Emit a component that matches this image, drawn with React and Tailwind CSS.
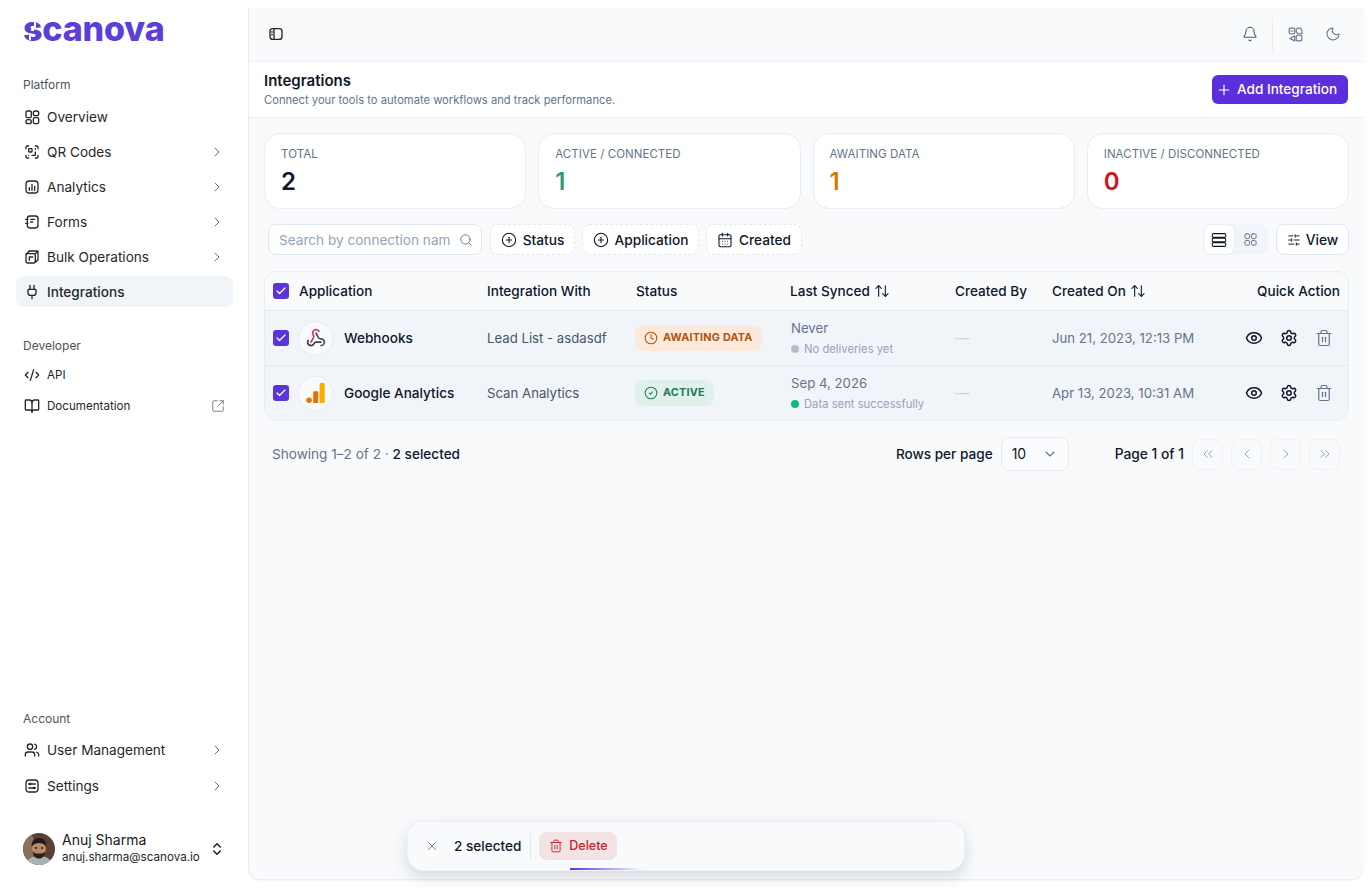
import React from "react";
import {
  ArrowUpDown, Bell, BookOpen, CalendarDays, Check, ChevronDown, ChevronLeft, ChevronRight, ChevronsLeft, ChevronsRight,
  ChevronsUpDown, CircleCheck, CirclePlus, Clock, CodeXml, Eye, Moon, Plug, Plus, ScanQrCode, Search, Settings,
  SlidersHorizontal, SquareArrowOutUpRight, Trash2, Users, X,
} from "lucide-react";

const S = ({ children, className = "size-4", sw = 2 }) => (
  <svg viewBox="0 0 24 24" fill="none" stroke="currentColor" strokeWidth={sw} strokeLinecap="round" strokeLinejoin="round" className={className}>
    {children}
  </svg>
);
const OverviewIcon = () => (
  <S className="size-4">
    <rect x="3" y="3" width="8" height="10" rx="2" />
    <rect x="14" y="3" width="8" height="7" rx="3" />
    <rect x="3" y="16" width="8" height="6" rx="3" />
    <rect x="14" y="13" width="8" height="9" rx="2" />
  </S>
);
const AnalyticsIcon = () => (
  <S className="size-4">
    <rect x="3" y="3" width="18" height="18" rx="5" />
    <path d="M8 17v-4M12 17V8M16 17v-6" />
  </S>
);
const FormsIcon = () => (
  <S className="size-4">
    <rect x="5" y="3" width="16" height="18" rx="4" />
    <path d="M10 8h6M10 12h3M2.500 8H6M2.500 14H6" />
  </S>
);
const BulkIcon = () => (
  <S className="size-4">
    <path d="M8 3h10a3 3 0 0 1 3 3v10l-4 4" />
    <rect x="3" y="7" width="14" height="14" rx="3" />
    <path d="M8 3 3 8M21 3l-4 4" />
    <path d="M8 17v-5h5" />
  </S>
);
const SettingsIcon = () => (
  <S className="size-4">
    <rect x="3" y="3" width="18" height="18" rx="5" />
    <path d="M7 9h10M7 15h10" />
    <circle cx="9" cy="9" r="1" />
    <circle cx="15" cy="15" r="1" />
  </S>
);
const PanelIcon = () => (
  <S className="size-4">
    <rect x="3" y="4" width="18" height="16" rx="4" />
    <path d="M9 4v16M5.500 9H6.500M5.500 13H6.500" />
  </S>
);
const LangIcon = () => (
  <S className="size-[17px] text-[#64748b]" sw={1.6}>
    <rect x="3" y="3" width="8" height="8" rx="2" />
    <path d="M5.500 7h3" />
    <rect x="13" y="13" width="8" height="8" rx="2" />
    <path d="M15 3h4l2 3v5h-6l-2-3V5z" />
    <path d="M11 14v7l-7-3.500z" />
  </S>
);
const RowsIcon = () => (
  <S className="size-[18px]" sw={1.4}>
    <rect x="3" y="3.500" width="18" height="5" rx="2" />
    <rect x="3" y="9.500" width="18" height="5" rx="2" />
    <rect x="3" y="15.500" width="18" height="5" rx="2" />
  </S>
);
const GridIcon = () => (
  <S className="size-[15px] text-[#64748b]" sw={1.6}>
    <rect x="3" y="3" width="7.500" height="7.500" rx="2.500" />
    <rect x="13.500" y="3" width="7.500" height="7.500" rx="2.500" />
    <rect x="3" y="13.500" width="7.500" height="7.500" rx="2.500" />
    <rect x="13.500" y="13.500" width="7.500" height="7.500" rx="2.500" />
  </S>
);
const WebhookLogo = () => (
  <svg viewBox="0 0 24 24" fill="none" strokeWidth="2" strokeLinecap="round" strokeLinejoin="round" className="size-5">
    <path stroke="#37474f" d="M18 16.980h-5.990c-1.100 0-1.950.940-2.480 1.900A4 4 0 0 1 2 17c.010-.700.200-1.400.570-2" />
    <path stroke="#c73a63" d="m6 17 3.130-5.780c.530-.970.100-2.180-.500-3.100a4 4 0 1 1 6.890-4.060" />
    <path stroke="#4b4b4b" d="m12 6 3.130 5.730C15.660 12.700 16.900 13 18 13a4 4 0 0 1 0 8" />
  </svg>
);
const GaLogo = () => (
  <svg viewBox="0 0 20 24" className="h-[22px] w-[19px]">
    <circle cx="3" cy="20" r="3" fill="#e37400" />
    <rect x="7.500" y="10" width="5.500" height="13" rx="1.200" fill="#e37400" />
    <rect x="14.500" y="1" width="5.500" height="22" rx="1.200" fill="#f9ab00" />
  </svg>
);
const Avatar = () => (
  <svg viewBox="0 0 32 32" className="size-8 rounded-full shrink-0">
    <rect width="32" height="32" fill="#5a4034" />
    <ellipse cx="6" cy="14" rx="6" ry="13" fill="#8d6f5e" />
    <path d="M3 32c1-7 7-9 13-9s12 2 13 9z" fill="#a9b2b5" />
    <ellipse cx="16" cy="16" rx="7" ry="8.500" fill="#b98a6c" />
    <path d="M8.500 14c0-6 3-9 7.500-9s7.500 3 7.500 9c-2-3-4-4-7.500-4s-5.500 1-7.500 4z" fill="#231814" />
    <path d="M9.500 18c1 6 3.500 7.500 6.500 7.500s5.500-1.500 6.500-7.500c-2 3-4 2.500-6.500 2.500s-4.500.500-6.500-2.500z" fill="#2e1f19" />
    <circle cx="13" cy="15" r="1" fill="#231814" />
    <circle cx="19" cy="15" r="1" fill="#231814" />
  </svg>
);

const NavItem = ({ icon, label, chevron, active }) => (
  <div className={`flex h-[31px] items-center rounded-lg pl-2 pr-2 ${active ? "bg-[#f1f5f9]" : ""}`}>
    <span className="flex w-4 justify-center text-[#27272a]">{icon}</span>
    <span className={`ml-[7px] pt-[2px] text-[13.6px] text-[#27272a] ${active ? "font-medium" : ""}`}>{label}</span>
    {chevron && <ChevronRight className="ml-auto size-4 text-[#71717a]" strokeWidth={1.5} />}
  </div>
);

const Label = ({ children }) => <div className="px-[7px] text-xs leading-4 text-[#52525b]">{children}</div>;

const Stat = ({ label, value, color }) => (
  <div className="h-[76px] rounded-2xl border border-[#e9edf2] bg-white px-4 pt-[12px]">
    <div className="text-[11.5px] leading-4 tracking-[0.005em] text-[#64748b]">{label}</div>
    <div className={`mt-[6px] text-2xl font-semibold leading-7 ${color}`}>{value}</div>
  </div>
);

const FilterBtn = ({ icon, label, className }) => (
  <div className={`flex h-[31px] items-center justify-center gap-[6px] rounded-lg border border-dashed border-[#e2e8f0] bg-white text-[13.7px] font-medium text-[#0f172a] ${className}`}>
    {icon}
    <span className="pt-[2px]">{label}</span>
  </div>
);

const Check2 = () => (
  <div className="flex size-4 items-center justify-center rounded-[3px] bg-[#5b34da] shrink-0">
    <Check className="size-3 text-white" strokeWidth={2.5} />
  </div>
);

const cols = "grid grid-cols-[214px_149px_154px_165px_97px_1fr] items-center";

const Head = ({ children, sort, className = "" }) => (
  <div className={`flex items-center gap-1 text-[13.6px] font-medium text-[#0f172a] ${className}`}>
    {children}
    {sort && <ArrowUpDown className="size-4" strokeWidth={1.6} />}
  </div>
);

const Actions = () => (
  <div className="flex items-center justify-end gap-[17px] pr-[15px] text-[#0f172a]">
    <Eye className="size-[18px]" />
    <Settings className="size-[18px]" />
    <Trash2 className="size-[18px] text-[#64748b]" strokeWidth={1.6} />
  </div>
);

const Row = ({ logo, name, target, pill, sync, dot, note, date }) => (
  <div className={`${cols} h-[55px] border-t border-[#e2e8f0] bg-[#f1f5f9] pl-2`}>
    <div className="flex items-center">
      <Check2 />
      <div className="ml-[9px] flex size-[35px] items-center justify-center rounded-full border border-[#e8ecf1] bg-[#f8fafc]">{logo}</div>
      <span className="ml-[11px] text-[13.6px] font-medium text-[#0f172a]">{name}</span>
    </div>
    <div className="pt-[2px] text-[13.2px] text-[#475569]">{target}</div>
    <div>{pill}</div>
    <div className="-mt-[2px] pl-px">
      <div className="text-[13.2px] leading-5 text-[#64748b]">{sync}</div>
      <div className="mt-[3px] flex items-center gap-[5px] text-[11.25px] leading-4 text-[#94a3b8]">
        <span className={`size-2 rounded-full ${dot}`} />
        {note}
      </div>
    </div>
    <div className="text-sm text-[#cbd5e1]">—</div>
    <div className="flex items-center justify-between">
      <span className="pt-[2px] text-[13.2px] text-[#64748b]">{date}</span>
      <Actions />
    </div>
  </div>
);

const Pill = ({ icon, label, className }) => (
  <div className={`-ml-px inline-flex h-[26px] items-center gap-[5px] rounded-lg px-[9px] text-[10.8px] font-bold tracking-[0.02em] ${className}`}>
    {icon}
    {label}
  </div>
);

const PageBtn = ({ children }) => (
  <div className="flex size-[31px] items-center justify-center rounded-lg border border-[#eef1f5] text-[#94a3b8]">{children}</div>
);

export default function App() {
  return (
    <div className="relative flex h-[888px] w-full overflow-hidden bg-white font-['Inter',sans-serif]">
      <aside className="flex w-[248px] shrink-0 flex-col pb-[22px] pl-4 pr-[15px]">
        <div className="relative ml-[7px] mt-[7px] h-[44px] text-[34px] font-extrabold leading-[44px] tracking-[-0.005em] text-[#5b3fd6]">
          scanova
          <span className="absolute left-[11px] top-[15px] h-[6px] w-[2px] bg-white" />
          <span className="absolute left-[6px] top-[27px] h-[6px] w-[2px] bg-white" />
          <span className="absolute left-[8px] top-[22px] h-[2px] w-[3px] bg-white" />
        </div>
        <div className="mt-[26px]">
          <Label>Platform</Label>
        </div>
        <div className="mt-[8px] flex flex-col gap-1">
          <NavItem icon={<OverviewIcon />} label="Overview" />
          <NavItem icon={<ScanQrCode className="size-4" />} label="QR Codes" chevron />
          <NavItem icon={<AnalyticsIcon />} label="Analytics" chevron />
          <NavItem icon={<FormsIcon />} label="Forms" chevron />
          <NavItem icon={<BulkIcon />} label="Bulk Operations" chevron />
          <NavItem icon={<Plug className="size-4" />} label="Integrations" active />
        </div>
        <div className="mt-[31px]">
          <Label>Developer</Label>
        </div>
        <div className="mt-[5px] flex flex-col">
          <div className="flex h-[31px] items-center px-2 text-[#27272a]">
            <CodeXml className="size-4" />
            <span className="ml-[7px] pt-[2px] text-[11.6px]">API</span>
          </div>
          <div className="flex h-[31px] items-center px-2 text-[#27272a]">
            <BookOpen className="size-4" />
            <span className="ml-[7px] pt-[2px] text-[11.6px]">Documentation</span>
            <SquareArrowOutUpRight className="ml-auto size-[14px] text-[#71717a]" strokeWidth={1.5} />
          </div>
        </div>
        <div className="mt-auto">
          <Label>Account</Label>
        </div>
        <div className="mt-[7px] flex flex-col gap-[5px]">
          <NavItem icon={<Users className="size-4" />} label="User Management" chevron />
          <NavItem icon={<SettingsIcon />} label="Settings" chevron />
        </div>
        <div className="mt-[30px] flex items-center pl-[7px] pr-2">
          <Avatar />
          <div className="ml-[7px] min-w-0 flex-1">
            <div className="text-sm leading-[17px] text-[#18181b]">Anuj Sharma</div>
            <div className="mt-px text-[11.65px] leading-[17px] text-[#27272a]">anuj.sharma@scanova.io</div>
          </div>
          <ChevronsUpDown className="size-4 text-[#18181b]" />
        </div>
      </aside>

      <main className="my-2 mr-2 flex min-w-0 flex-1 flex-col rounded-b-xl border-b border-l border-[#e9edf2] bg-[#f8fafc] shadow-[0_1px_2px_rgba(0,0,0,0.04)]">
        <div className="flex h-[54px] shrink-0 items-center border-b border-[#eef1f5] pb-px pl-[19px] pr-[23px]">
          <span className="text-[#27272a]"><PanelIcon /></span>
          <div className="ml-auto flex items-center">
            <Bell className="size-4 text-[#475569]" strokeWidth={1.6} />
            <div className="mx-[14px] h-[34px] w-px bg-[#eaeef3]" />
            <LangIcon />
            <Moon className="ml-[21px] size-4 text-[#64748b]" strokeWidth={1.6} />
          </div>
        </div>
        <div className="flex h-[56px] shrink-0 items-center justify-between border-b border-[#eef1f5] bg-white pl-[15px] pr-4">
          <div>
            <div className="text-[15px] font-semibold leading-5 text-[#0f172a]">Integrations</div>
            <div className="mt-[1px] text-[11.2px] leading-4 text-[#64748b]">Connect your tools to automate workflows and track performance.</div>
          </div>
          <div className="flex h-[29px] w-[136px] items-center gap-[5px] rounded-md bg-[#5b30dc] pl-1 text-[13.6px] font-medium text-white">
            <Plus className="size-4" strokeWidth={1.8} />
            Add Integration
          </div>
        </div>
        <div className="flex flex-1 flex-col pl-[15px] pr-[15px] pt-[15px]">
          <div className="grid grid-cols-4 gap-3">
            <Stat label="TOTAL" value="2" color="text-[#0f172a]" />
            <Stat label="ACTIVE / CONNECTED" value="1" color="text-[#2b9b74]" />
            <Stat label="AWAITING DATA" value="1" color="text-[#d97706]" />
            <Stat label="INACTIVE / DISCONNECTED" value="0" color="text-[#d0141f]" />
          </div>

          <div className="mt-[15px] flex items-center pl-1">
            <div className="flex h-[31px] w-[214px] items-center rounded-lg border border-[#e2e8f0] bg-white pl-[10px] pr-2">
              <span className="flex-1 whitespace-nowrap pt-[2px] text-[13.6px] text-[#94a3b8]">Search by connection nam</span>
              <Search className="size-[14px] shrink-0 text-[#64748b]" strokeWidth={1.6} />
            </div>
            <FilterBtn className="ml-2 w-[85px]" icon={<CirclePlus className="size-4" strokeWidth={1.6} />} label="Status" />
            <FilterBtn className="ml-[7px] w-[117px]" icon={<CirclePlus className="size-4" strokeWidth={1.6} />} label="Application" />
            <FilterBtn className="ml-[7px] w-[96px]" icon={<CalendarDays className="size-4" strokeWidth={1.6} />} label="Created" />
            <div className="ml-auto flex h-[31px] w-[65px] rounded-lg bg-[#f1f5f9]">
              <div className="flex w-[32px] items-center justify-center rounded-lg border border-[#e9edf2] bg-white text-[#0f172a]"><RowsIcon /></div>
              <div className="flex flex-1 items-center justify-center pr-[3px]"><GridIcon /></div>
            </div>
            <div className="ml-2 flex h-[31px] w-[73px] items-center justify-center gap-[5px] rounded-lg border border-[#e2e8f0] bg-white text-[13.8px] font-medium text-[#0f172a]">
              <SlidersHorizontal className="size-[14px]" strokeWidth={1.6} />
              <span className="pt-[2px]">View</span>
            </div>
          </div>

          <div className="mt-4 overflow-hidden rounded-xl border border-[#e9edf2]">
            <div className={`${cols} h-[38px] bg-[#f8fafc] pl-2`}>
              <div className="flex items-center gap-[10px]">
                <Check2 />
                <Head>Application</Head>
              </div>
              <Head>Integration With</Head>
              <Head>Status</Head>
              <Head sort>Last Synced</Head>
              <Head>Created By</Head>
              <div className="flex items-center justify-between">
                <Head sort>Created On</Head>
                <Head className="pr-2">Quick Action</Head>
              </div>
            </div>
            <Row
              logo={<WebhookLogo />}
              name="Webhooks"
              target="Lead List - asdasdf"
              pill={<Pill className="bg-[#fbeadb] text-[#b45309]" icon={<Clock className="size-[14px]" strokeWidth={1.8} />} label="AWAITING DATA" />}
              sync="Never"
              dot="bg-[#b5bdc9]"
              note="No deliveries yet"
              date="Jun 21, 2023, 12:13 PM"
            />
            <Row
              logo={<GaLogo />}
              name="Google Analytics"
              target="Scan Analytics"
              pill={<Pill className="bg-[#dff1ea] text-[#217a5b]" icon={<CircleCheck className="size-[14px]" strokeWidth={1.8} />} label="ACTIVE" />}
              sync="Sep 4, 2026"
              dot="bg-[#10b981]"
              note="Data sent successfully"
              date="Apr 13, 2023, 10:31 AM"
            />
          </div>

          <div className="mt-4 flex items-center pl-2 pr-[9px]">
            <div className="text-[13.6px] text-[#64748b]">
              Showing 1–2 of 2 · <span className="font-medium text-[#0f172a]">2 selected</span>
            </div>
            <div className="ml-auto text-[13.6px] font-medium text-[#0f172a]">Rows per page</div>
            <div className="ml-2 flex h-[34px] w-[68px] items-center justify-between rounded-lg border border-[#e8ecf1] bg-[#fbfcfd] pl-[10px] pr-[10px] text-sm text-[#0f172a]">
              10
              <ChevronDown className="size-4 text-[#64748b]" strokeWidth={1.6} />
            </div>
            <div className="ml-[46px] text-[13.8px] font-medium text-[#0f172a]">Page 1 of 1</div>
            <div className="ml-2 flex gap-2">
              <PageBtn><ChevronsLeft className="size-4" strokeWidth={1.5} /></PageBtn>
              <PageBtn><ChevronLeft className="size-4" strokeWidth={1.5} /></PageBtn>
              <PageBtn><ChevronRight className="size-4" strokeWidth={1.5} /></PageBtn>
              <PageBtn><ChevronsRight className="size-4" strokeWidth={1.5} /></PageBtn>
            </div>
          </div>
        </div>
      </main>

      <div className="absolute left-[407px] top-[821px] flex h-[50px] w-[558px] items-center overflow-hidden rounded-2xl border border-[#eef1f5] bg-[#f8fafc] pl-[17px] shadow-[0_6px_16px_rgba(15,23,42,0.14)]">
        <X className="size-[14px] text-[#64748b]" strokeWidth={1.6} />
        <span className="ml-[15px] text-[13.6px] font-medium text-[#0f172a]">2 selected</span>
        <div className="ml-[9px] h-[26px] w-px bg-[#e2e8f0]" />
        <div className="ml-2 flex h-[28px] w-[78px] items-center justify-center gap-[6px] rounded-lg bg-[#f3e3e3] text-[12.5px] font-medium text-[#c2272d]">
          <Trash2 className="size-[14px]" strokeWidth={1.6} />
          Delete
        </div>
        <div className="absolute bottom-0 left-[162px] h-[2px] w-[72px] bg-gradient-to-r from-[#5b34da] to-transparent" />
      </div>
    </div>
  );
}
